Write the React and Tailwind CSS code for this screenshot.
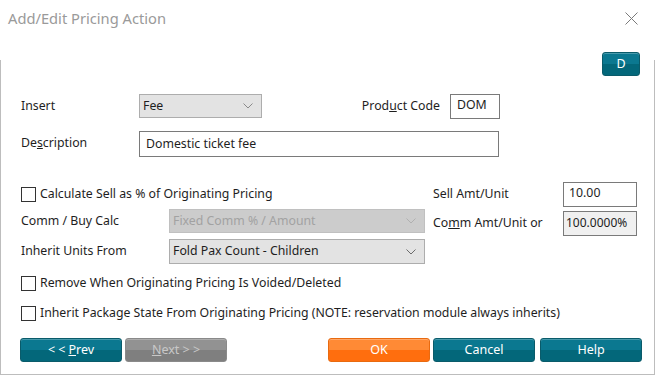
import React from "react";

const font = { fontFamily: '"Noto Sans", "Open Sans", sans-serif' };

function Chevron({ color = "#6b6b6b" }) {
  return (
    <svg width="10" height="6" viewBox="0 0 10 6" className="shrink-0">
      <polyline points="0.5,0.5 5,5 9.5,0.5" fill="none" stroke={color} strokeWidth="1" />
    </svg>
  );
}

function Checkbox() {
  return <div className="w-[15px] h-[15px] border border-[#333333] bg-white shrink-0" />;
}

function Btn({ children, variant = "teal", className = "" }) {
  const styles = {
    teal: "bg-[linear-gradient(to_bottom,#0b7890_0%,#0b7890_50%,#03677a_50%,#03677a_100%)] border-[#0a5b6a] text-white",
    orange: "bg-[linear-gradient(to_bottom,#ff8a35_0%,#ff8a35_50%,#ff6e0e_50%,#ff6e0e_100%)] border-[#e86a10] text-white",
    gray: "bg-[linear-gradient(to_bottom,#929292_0%,#929292_50%,#7f7f7f_50%,#7f7f7f_100%)] border-[#8a8a8a] text-[#c8c8c8]",
  };
  return (
    <div
      className={`h-[24px] rounded-[3px] border flex items-center justify-center text-[12.5px] shadow-[inset_0_1px_0_rgba(255,255,255,0.25)] ${styles[variant]} ${className}`}
    >
      {children}
    </div>
  );
}

export default function App() {
  return (
    <div className="w-[655px] h-[376px] bg-white flex flex-col text-[#1e1e1e]" style={font}>
      <div className="h-[60px] flex items-start justify-between pl-[8px] pr-[17px] pt-[7px]">
        <span className="text-[14.7px] text-[#9a9a9a]">Add/Edit Pricing Action</span>
        <svg width="13" height="13" viewBox="0 0 13 13" className="mt-[5px]">
          <line x1="0.5" y1="0.5" x2="12.5" y2="12.5" stroke="#7a7a7a" strokeWidth="1" />
          <line x1="12.5" y1="0.5" x2="0.5" y2="12.5" stroke="#7a7a7a" strokeWidth="1" />
        </svg>
      </div>
      <div className="h-[315px] border-l border-r border-b border-[#bdbdbd] flex flex-col text-[12.3px]">
        <div className="-mt-[8px] flex justify-end pr-[14px]">
          <Btn className="w-[38px]">D</Btn>
        </div>

        {/* Row 1 */}
        <div className="mt-[18px] pl-[20px] flex items-start w-[499px]">
          <div className="w-[118px] h-[24px] flex items-center">Insert</div>
          <div className="w-[123px] h-[24px] bg-[#e3e3e3] border border-[#adadad] flex items-center justify-between pl-[3px] pr-[8px]">
            <span>Fee</span>
            <Chevron color="#8a8a8a" />
          </div>
          <div className="ml-auto h-[24px] flex items-center mr-[10px]">
            <span>
              Prod<span className="underline">u</span>ct Code
            </span>
          </div>
          <div className="w-[50px] h-[25px] border border-[#7a7a7a] flex items-center pl-[6px] pb-[2px]">DOM</div>
        </div>

        {/* Row 2 */}
        <div className="mt-[12px] pl-[20px] flex items-start">
          <div className="w-[118px] h-[24px] flex items-center">
            <span>
              De<span className="underline">s</span>cription
            </span>
          </div>
          <div className="w-[360px] h-[26px] border border-[#7a7a7a] flex items-center pl-[6px]">Domestic ticket fee</div>
        </div>

        {/* Middle */}
        <div className="mt-[25px] pl-[20px] flex items-start">
          <div className="flex flex-col w-[404px]">
            <div className="h-[25px] flex items-center">
              <Checkbox />
              <span className="ml-[4px]">Calculate Sell as % of Originating Pricing</span>
            </div>
            <div className="mt-[2px] h-[24px] flex items-center">
              <div className="w-[148px]">Comm / Buy Calc</div>
              <div className="w-[256px] h-[24px] bg-[#cccccc] border border-[#c0c0c0] flex items-center justify-between pl-[3px] pr-[8px] text-[#a2a2a2]">
                <span>Fixed Comm % / Amount</span>
                <Chevron color="#b0b0b0" />
              </div>
            </div>
            <div className="mt-[6px] h-[25px] flex items-center">
              <div className="w-[148px]">Inherit Units From</div>
              <div className="w-[256px] h-[25px] bg-[#e3e3e3] border border-[#adadad] flex items-center justify-between pl-[3px] pr-[8px]">
                <span>Fold Pax Count - Children</span>
                <Chevron />
              </div>
            </div>
          </div>
          <div className="ml-[8px] flex flex-col">
            <div className="h-[25px] flex items-center">
              <div className="w-[130px]">Sell Amt/Unit</div>
              <div className="w-[74px] h-[25px] border border-[#7a7a7a] flex items-center pl-[5px] pb-[2px]">10.00</div>
            </div>
            <div className="mt-[4px] h-[25px] flex items-center">
              <div className="w-[130px]">
                Co<span className="underline">m</span>m Amt/Unit or
              </div>
              <div className="w-[74px] h-[25px] border border-[#7a7a7a] bg-[#f0f0f0] flex items-center pl-[2px] pb-[2px] text-[12px]">
                100.0000%
              </div>
            </div>
          </div>
        </div>

        {/* Checkbox rows */}
        <div className="mt-[12px] pl-[20px] h-[15px] flex items-center">
          <Checkbox />
          <span className="ml-[4px]">Remove When Originating Pricing Is Voided/Deleted</span>
        </div>
        <div className="mt-[15px] pl-[20px] h-[15px] flex items-center">
          <Checkbox />
          <span className="ml-[4px]">
            Inherit Package State From Originating Pricing (NOTE: reservation module always inherits)
          </span>
        </div>

        {/* Buttons */}
        <div className="mt-[17px] pl-[19px] flex items-center">
          <Btn className="w-[102px]">
            &lt; &lt; <span className="underline ml-[3px]">P</span>rev
          </Btn>
          <Btn variant="gray" className="w-[102px] ml-[3px]">
            <span className="underline">N</span>ext &gt; &gt;
          </Btn>
          <Btn variant="orange" className="w-[102px] ml-[101px]">OK</Btn>
          <Btn className="w-[102px] ml-[3px]">Cancel</Btn>
          <Btn className="w-[102px] ml-[5px]">Help</Btn>
        </div>
      </div>
    </div>
  );
}
